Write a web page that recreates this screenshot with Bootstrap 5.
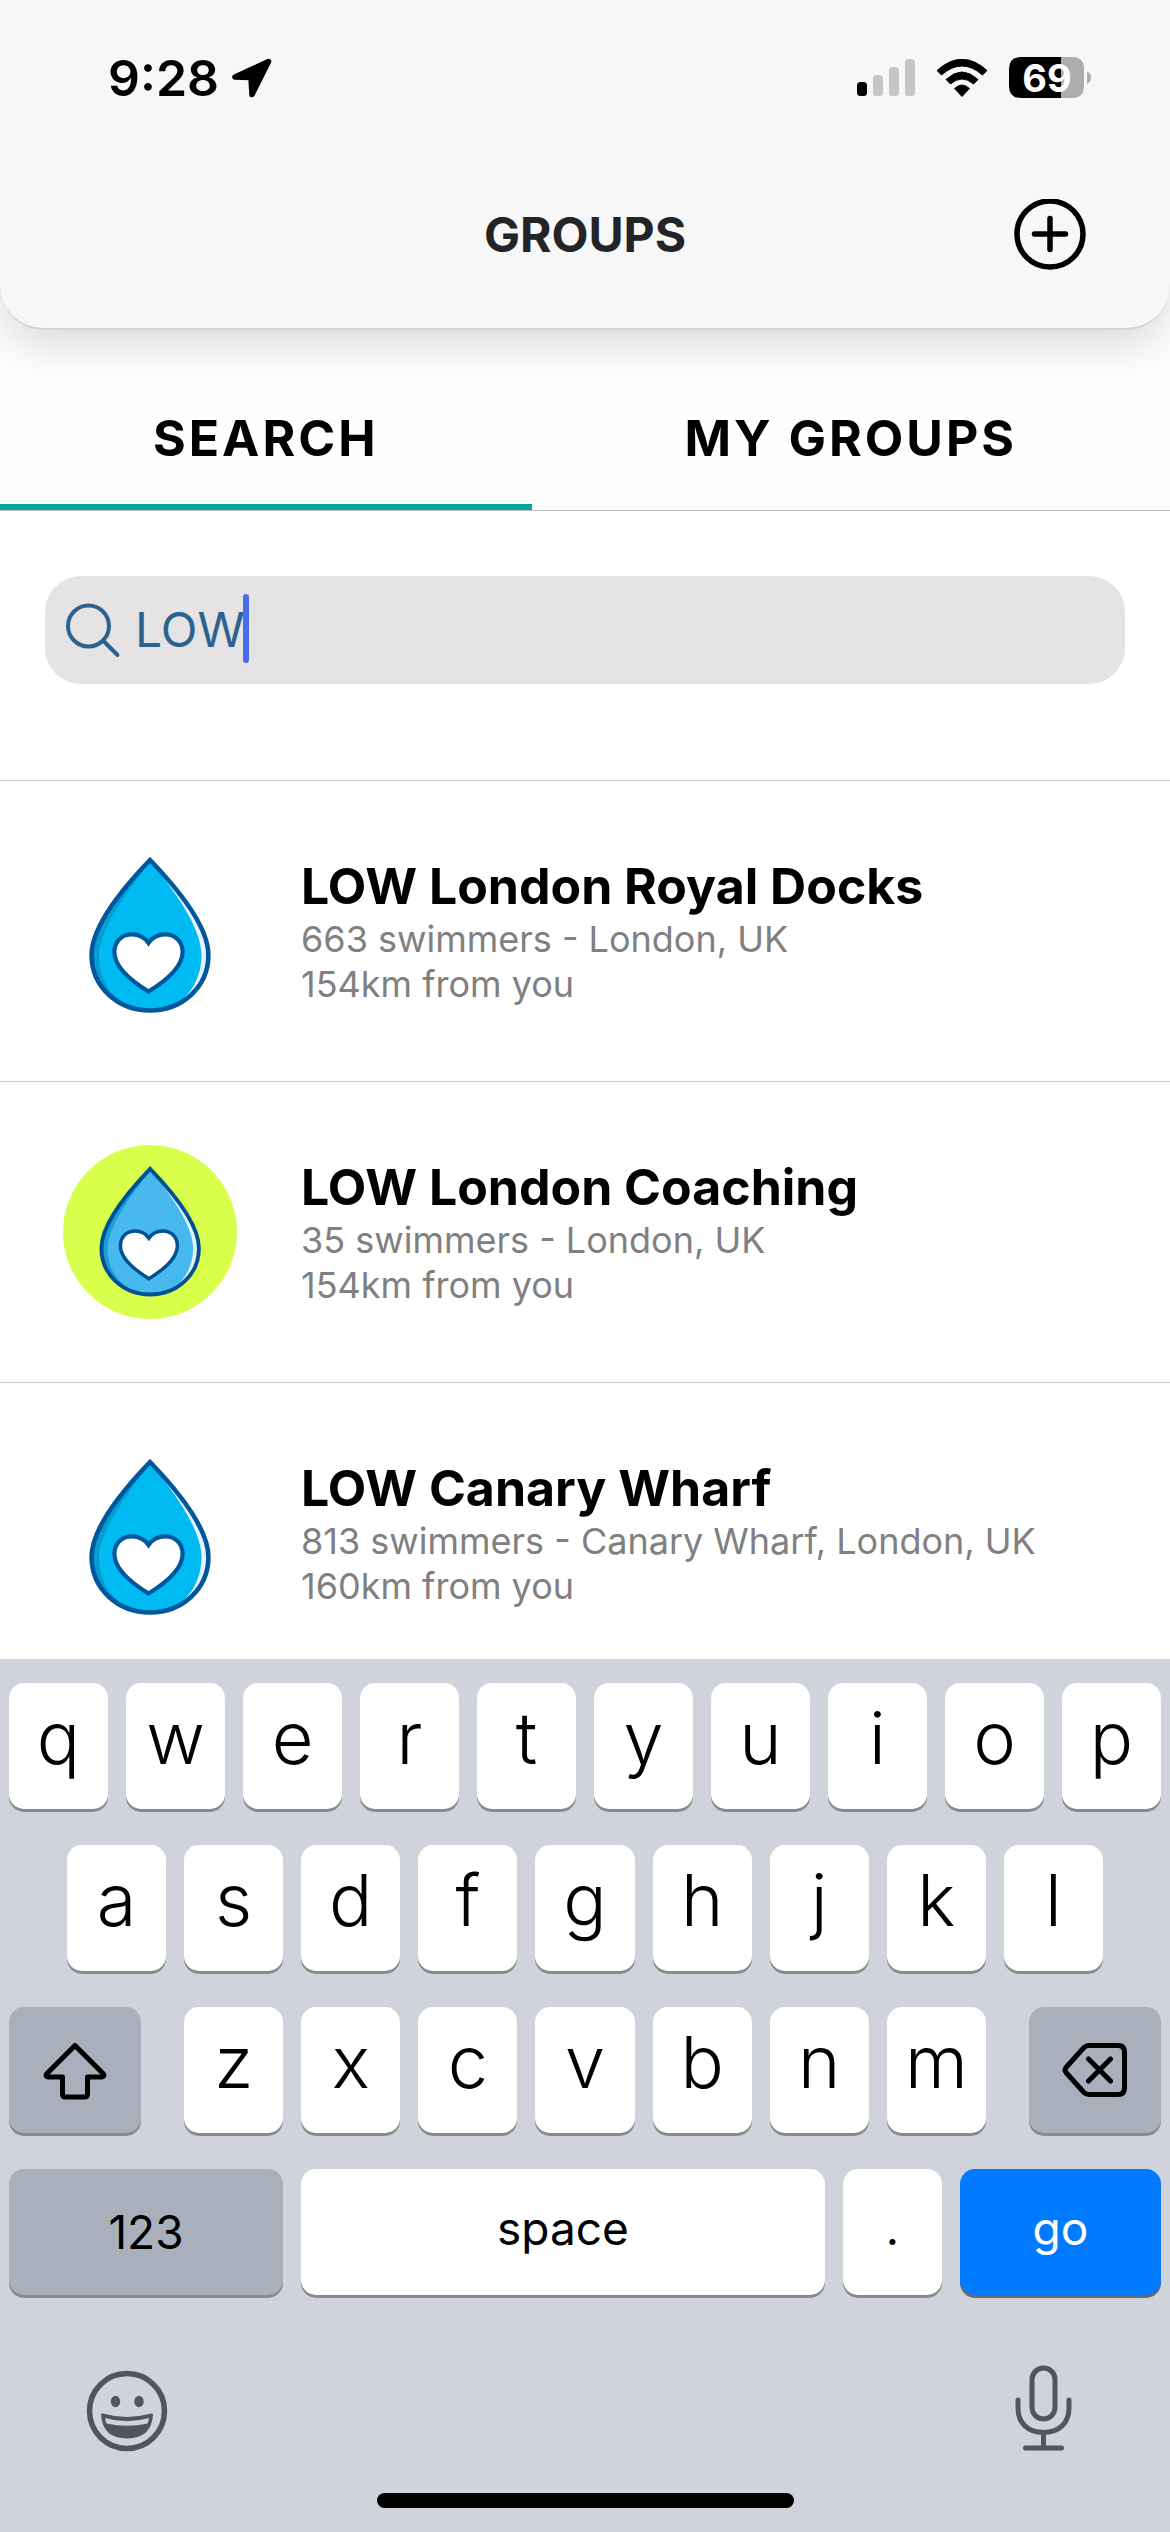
<!DOCTYPE html>
<html lang="en">
<head>
<meta charset="utf-8">
<meta name="viewport" content="width=device-width, initial-scale=1">
<title>Groups</title>
<link href="https://cdn.jsdelivr.net/npm/bootstrap@5.3.0/dist/css/bootstrap.min.css" rel="stylesheet">
<style>
  body { font-family: Inter, "Liberation Sans", sans-serif; color: #000; background: #fff; }
  svg { display: block; flex: none; }

  .app-header { background: #f7f7f7; border-bottom: 2px solid #d4d4d4; border-radius: 0 0 44px 44px; box-shadow: 0 12px 48px rgba(0,0,0,.16); padding-bottom: 14px; z-index: 2; }
  .status-bar { height: 156px; padding: 0 77px 0 108px; gap: 12px; }
  .status-icons { gap: 22px; }
  .clock { font-size: 50px; line-height: 60px; font-weight: 600; }
  .battery-box { width: 84px; height: 42px; }
  .battery-text { width: 76px; font-size: 38px; line-height: 42px; font-weight: 700; color: #fff; }
  .title-bar { display: grid; grid-template-columns: 1fr auto 1fr; height: 158px; padding: 0 84px; }
  .title-bar h1 { font-size: 48px; line-height: 60px; font-weight: 700; color: #222428; }

  .tab-strip { border-bottom: 1px solid #bfc0c2; }
  .tab-strip .tab-btn { height: 180px; padding: 42px 0 0; border: 0; border-bottom: 6px solid transparent; border-radius: 0; background: #fefefe; color: #000; font-size: 50px; line-height: 60px; font-weight: 700; letter-spacing: 3px; }
  .tab-strip .tab-btn.active { border-bottom-color: #00a699; }

  .search-area { padding: 65px 45px 96px; }
  .search-box { height: 108px; border-radius: 36px; background: #e5e3e4; color: #2c628f; padding: 0 20px; }
  .search-box .form-control { background: transparent; border: 0; box-shadow: none; color: inherit; font-size: 48px; line-height: 60px; padding: 0 0 0 14px; }
  .text-caret { left: 198px; top: 18px; width: 6px; height: 69px; border-radius: 3px; background: #4a6cf0; }

  .group-list { flex: 1 1 0; min-height: 0; overflow: hidden; border-radius: 0; }
  .group-list .group-row { border: solid #c7c7cb; border-width: 1px 0 0; border-radius: 0; padding: 63px; gap: 64px; color: #000; }
  .group-row h2 { font-size: 50px; line-height: 62px; font-weight: 700; }
  .group-row p { font-size: 36px; line-height: 45px; color: #808080; }
  .group-info { margin: 11px 0; min-width: 0; white-space: nowrap; }

  .keyboard { background: #d0d3dc; padding: 24px 9px; }
  .key-rows { gap: 36px; }
  .key-row { gap: 18px; }
  .key { flex: 99 1 0; min-width: 0; height: 126px; padding: 0 0 16px; border: 0; border-radius: 15px; background: #fff; color: #000; box-shadow: 0 3px 0 #898a8d; font-size: 72px; line-height: 88px; font-weight: 350; }
  .key-row.inset-keys { padding: 0 58px; }
  .key-label { font-size: 46px; font-weight: 400; line-height: 56px; padding-bottom: 8px; }
  .key-dark { background: #a9afbb; padding: 0; }
  .key-shift { flex-grow: 132; }
  .key-num { flex-grow: 274; }
  .key-space { flex-grow: 524; }
  .key-go { flex-grow: 201; background: #007aff; color: #fff; box-shadow: 0 3px 0 #66696e; }
  .key-letters { flex: 801 1 0; margin: 0 25px; }
  .key-tools { padding: 70px 77px 0; color: #50555e; }
  .key-tools .btn { color: inherit; }
  .home-bar { width: 417px; height: 15px; border-radius: 8px; background: #000; margin-top: 40px; }
</style>
</head>
<body>
<svg width="0" height="0" class="position-absolute" aria-hidden="true">
  <defs>
    <g id="drop">
      <path fill="var(--shade)" stroke="none" d="M87 16C61 43 28.600 81 28.600 111C28.600 143 55 166.500 87 166.500C119 166.500 145.400 143 145.400 111C145.400 81 113 43 87 16Z"/>
      <path fill="#e4f3fd" d="M90 20C113 44 145 82 145 111C145 137 128 156 104 163L87 160Z"/>
      <path fill="var(--main)" d="M87 17C69 42 36 84 36 111C36 140 52 158 76 166L87 167L104 164C126 156 138.500 135 138.500 111C138.500 84 112 47 87 17Z"/>
      <path fill="none" stroke="var(--edge)" stroke-width="4.600" d="M87 16C61 43 28.600 81 28.600 111C28.600 143 55 166.500 87 166.500C119 166.500 145.400 143 145.400 111C145.400 81 113 43 87 16Z"/>
      <path fill="#fff" stroke="var(--edge)" stroke-width="4.200" d="M85.500 99C81 92.500 75 90.400 69 90.400C58 90.400 51.400 98 51.400 108C51.400 124 70 138 85.500 147.500C101 138 119.600 124 119.600 108C119.600 98 113 90.400 102 90.400C96 90.400 90 92.500 85.500 99Z"/>
    </g>
  </defs>
</svg>

<div class="d-flex flex-column vh-100 overflow-hidden">
  <header class="app-header position-relative">
    <div class="status-bar d-flex align-items-center">
      <span class="clock">9:28</span>
      <svg width="42" height="42" viewBox="0 0 42 42"><path d="M37.500 4.500L4 20L20 20.500L21 37.500Z" fill="#000" stroke="#000" stroke-width="5.500" stroke-linejoin="round"/></svg>
      <div class="status-icons ms-auto d-flex align-items-center">
        <svg width="58" height="38" viewBox="0 0 58 38"><rect y="23" width="10" height="14" rx="3.500"/><g fill="#c6c6c6"><rect x="16" y="16" width="10" height="21" rx="3.500"/><rect x="32" y="8" width="10" height="29" rx="3.500"/><rect x="48" width="10" height="37" rx="3.500"/></g></svg>
        <svg width="50" height="38" viewBox="0 0 50 38"><path d="M0 11.500Q25-11 50 11.500L45.500 16Q25-2 4.500 16ZM9 20.500Q25 5.500 41 20.500L36.500 25Q25 15 13.500 25ZM17.500 29.500Q25 22.500 32.500 29.500L25 37.500Z" stroke="#000" stroke-width="1" stroke-linejoin="round"/></svg>
        <div class="battery-box position-relative">
          <svg class="position-absolute" width="84" height="42" viewBox="0 0 84 42"><path d="M12 0H52V41H12Q0 41 0 29V12Q0 0 12 0Z"/><path fill="#adadad" d="M52 0H63Q75 0 75 12V29Q75 41 63 41H52ZM78 14.500Q82 16 82 20.500T78 27Z"/></svg>
          <div class="battery-text position-relative text-center">69</div>
        </div>
      </div>
    </div>
    <div class="title-bar align-items-center">
      <span></span>
      <h1 class="m-0">GROUPS</h1>
      <button class="btn p-0 border-0 ms-auto" type="button" aria-label="Add group">
        <svg width="72" height="72" viewBox="0 0 72 72" fill="none" stroke="#000" stroke-width="5.500" stroke-linecap="round"><circle cx="36" cy="35" r="33"/><path d="M20.500 35H51.500M36 19.500V50.500"/></svg>
      </button>
    </div>
  </header>

  <nav class="tab-strip nav flex-nowrap" role="tablist">
    <button class="tab-btn flex-fill active" type="button" role="tab" aria-selected="true">SEARCH</button>
    <button class="tab-btn flex-fill" type="button" role="tab" aria-selected="false">MY GROUPS</button>
  </nav>

  <form class="search-area">
    <div class="search-box d-flex align-items-center position-relative">
      <label for="q" aria-label="Search groups">
        <svg width="56" height="56" viewBox="0 0 56 56" fill="none" stroke="currentColor" stroke-width="4" stroke-linecap="round"><circle cx="23.500" cy="24" r="20.500"/><path d="M38.500 39L52.500 53"/></svg>
      </label>
      <input id="q" class="form-control" type="text" value="LOW">
      <span class="text-caret position-absolute"></span>
    </div>
  </form>

  <main class="group-list list-group">
    <a href="#" class="group-row list-group-item d-flex align-items-center" style="--main:#00baf2;--shade:#089cd2;--edge:#00579c">
      <svg width="174" height="174" viewBox="0 0 174 174"><use href="#drop"/></svg>
      <div class="group-info">
        <h2 class="m-0">LOW London Royal Docks</h2>
        <p class="m-0">663 swimmers - London, UK</p>
        <p class="m-0">154km from you</p>
      </div>
    </a>
    <a href="#" class="group-row list-group-item d-flex align-items-center" style="--main:#47b9ee;--shade:#1d9cd8;--edge:#005092">
      <svg width="174" height="174" viewBox="0 0 174 174"><circle cx="87" cy="87" r="87" fill="#d8ff4c"/><use href="#drop" transform="translate(14.500 10.500) scale(.835)"/></svg>
      <div class="group-info">
        <h2 class="m-0">LOW London Coaching</h2>
        <p class="m-0">35 swimmers - London, UK</p>
        <p class="m-0">154km from you</p>
      </div>
    </a>
    <a href="#" class="group-row list-group-item d-flex align-items-center" style="--main:#00baf2;--shade:#089cd2;--edge:#00579c">
      <svg width="174" height="174" viewBox="0 0 174 174"><use href="#drop"/></svg>
      <div class="group-info">
        <h2 class="m-0">LOW Canary Wharf</h2>
        <p class="m-0">813 swimmers - Canary Wharf, London, UK</p>
        <p class="m-0">160km from you</p>
      </div>
    </a>
  </main>

  <footer class="keyboard">
    <div class="key-rows d-flex flex-column">
      <div class="key-row d-flex">
        <button class="key" type="button">q</button><button class="key" type="button">w</button><button class="key" type="button">e</button><button class="key" type="button">r</button><button class="key" type="button">t</button><button class="key" type="button">y</button><button class="key" type="button">u</button><button class="key" type="button">i</button><button class="key" type="button">o</button><button class="key" type="button">p</button>
      </div>
      <div class="key-row inset-keys d-flex">
        <button class="key" type="button">a</button><button class="key" type="button">s</button><button class="key" type="button">d</button><button class="key" type="button">f</button><button class="key" type="button">g</button><button class="key" type="button">h</button><button class="key" type="button">j</button><button class="key" type="button">k</button><button class="key" type="button">l</button>
      </div>
      <div class="key-row d-flex">
        <button class="key key-dark key-shift" type="button" aria-label="Shift"><svg class="mx-auto" width="66" height="60" viewBox="0 0 66 60" fill="none" stroke="#000" stroke-width="5" stroke-linejoin="round"><path d="M33 5.500L4.500 34Q3 36.500 6 37H20.500V54Q20.500 57 23.500 57H42.500Q45.500 57 45.500 54V37H60Q63 36.500 61.500 34Z"/></svg></button>
        <div class="key-letters key-row d-flex">
          <button class="key" type="button">z</button><button class="key" type="button">x</button><button class="key" type="button">c</button><button class="key" type="button">v</button><button class="key" type="button">b</button><button class="key" type="button">n</button><button class="key" type="button">m</button>
        </div>
        <button class="key key-dark key-shift" type="button" aria-label="Delete"><svg class="mx-auto" width="66" height="56" viewBox="0 0 66 56" fill="none" stroke="#000" stroke-width="5" stroke-linecap="round" stroke-linejoin="round"><path d="M27 3.500H56Q62.500 3.500 62.500 10V46Q62.500 52.500 56 52.500H27Q24 52.500 22 50.500L4 30.500Q2 28 4 25.500L22 5.500Q24 3.500 27 3.500ZM26.500 17L48.500 39M48.500 17L26.500 39"/></svg></button>
      </div>
      <div class="key-row d-flex">
        <button class="key key-label key-dark key-num" type="button">123</button><button class="key key-label key-space" type="button">space</button><button class="key key-label" type="button">.</button><button class="key key-label key-go" type="button">go</button>
      </div>
    </div>
    <div class="key-tools d-flex align-items-center justify-content-between">
      <button class="btn p-0 border-0" type="button" aria-label="Emoji">
        <svg width="82" height="88" viewBox="0 0 82 88"><circle cx="41" cy="46" r="37.500" fill="none" stroke="currentColor" stroke-width="5.500"/><ellipse cx="29.500" cy="36.500" rx="4.700" ry="5.700" fill="currentColor"/><ellipse cx="53" cy="36.500" rx="4.700" ry="5.700" fill="currentColor"/><path d="M16.500 50Q41 57 65.500 50Q64 72 41 72T16.500 50Z" fill="currentColor" stroke="currentColor" stroke-width="3" stroke-linejoin="round"/><path d="M19 53Q41 59.500 63 53Q62.500 56 61.500 58.500Q41 63 20.500 58.500Q19.500 56 19 53Z" fill="#d0d3dc"/></svg>
      </button>
      <button class="btn p-0 border-0" type="button" aria-label="Dictate">
        <svg width="82" height="88" viewBox="0 0 82 88" fill="none" stroke="currentColor" stroke-width="5" stroke-linecap="round"><rect x="30" y="3" width="23" height="51" rx="11.500"/><path d="M16 35V43C16 58 26 67.500 41.500 67.500S67 58 67 43V35M41.500 68V83M23.500 83H59.500"/></svg>
      </button>
    </div>
    <div class="home-bar mx-auto"></div>
  </footer>
</div>
<script src="https://cdn.jsdelivr.net/npm/bootstrap@5.3.0/dist/js/bootstrap.bundle.min.js"></script>
</body>
</html>
